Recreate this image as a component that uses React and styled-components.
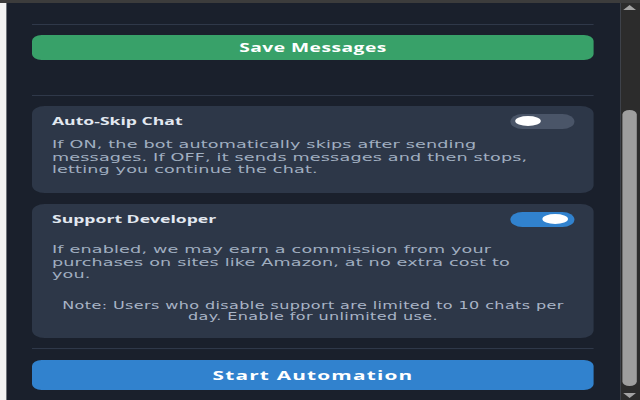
import React, { useState } from 'react';
import styled, { createGlobalStyle } from 'styled-components';

const GlobalStyle = createGlobalStyle`
  html, body {
    margin: 0;
    padding: 0;
    background: #f3f3f3;
    overflow: hidden;
  }
  body {
    font-family: "Open Sans", "Liberation Sans", sans-serif;
  }
`;

// the popup is drawn at 400px wide and stretched across the 640px window
const Stage = styled.div`
  width: 400px;
  height: 400px;
  transform: scaleX(1.6);
  transform-origin: 0 0;
  display: flex;
  flex-direction: column;
`;

const TopBand = styled.div`
  height: 3px;
  flex-shrink: 0;
  background: #3c3c3c;
`;

const Body = styled.div`
  flex: 1;
  display: flex;
  min-height: 0;
`;

const Gutter = styled.div`
  width: 4.4px;
  background: #f3f3f3;
`;

const Panel = styled.main`
  flex: 1;
  display: flex;
  flex-direction: column;
  padding: 0 16.25px 0 15.6px;
  background: #1a202c;
`;

const Divider = styled.hr`
  margin: ${(p) => p.$top}px 0 0;
  border: 0;
  height: 1px;
  background: #2f3849;
`;

const Button = styled.button`
  margin-top: ${(p) => p.$top}px;
  height: ${(p) => p.$height}px;
  border: 0;
  border-radius: 6px;
  background: ${(p) => p.$color};
  color: #ffffff;
  font-family: inherit;
  font-weight: 700;
  font-size: ${(p) => p.$size}px;
  letter-spacing: ${(p) => p.$spacing}px;
  cursor: pointer;
`;

const Card = styled.section`
  margin-top: ${(p) => p.$top}px;
  padding: 7px 12.5px 16.5px;
  border-radius: 8px;
  background: #2d3748;
`;

const CardHeader = styled.div`
  display: flex;
  align-items: center;
  justify-content: space-between;
  height: 16px;
`;

const Title = styled.h3`
  margin: 0;
  font-size: 11px;
  line-height: 16px;
  font-weight: 700;
  color: #e2e8f0;
`;

const Desc = styled.p`
  margin: ${(p) => p.$top}px 0 0;
  max-width: 313px;
  font-family: "DejaVu Sans", "Open Sans", sans-serif;
  font-size: 11px;
  line-height: 12.5px;
  letter-spacing: 0.1px;
  color: #a0aec0;
`;

const Note = styled.p`
  margin: 18px 0 0;
  font-family: "DejaVu Sans", "Open Sans", sans-serif;
  font-size: 10px;
  line-height: 11px;
  letter-spacing: 0.25px;
  text-align: center;
  color: #a9b4c6;
`;

const Track = styled.button`
  width: 40px;
  height: 15px;
  padding: 0 3.5px;
  border: 0;
  border-radius: 8px;
  display: flex;
  align-items: center;
  justify-content: ${(p) => (p.$on ? 'flex-end' : 'flex-start')};
  background: ${(p) => (p.$on ? '#3182ce' : '#4a5568')};
  cursor: pointer;
`;

const Knob = styled.span`
  width: 16px;
  height: 10px;
  border-radius: 50%;
  background: #ffffff;
`;

const Scrollbar = styled.div`
  width: 12.5px;
  display: flex;
  flex-direction: column;
  align-items: center;
  background: #2c2c2c;
`;

const Arrow = styled.svg`
  width: 9px;
  height: 7px;
  margin: ${(p) => p.$margin};
  fill: #a3a3a3;
`;

const Thumb = styled.div`
  width: 9.4px;
  height: 276px;
  margin-top: 99px;
  border-radius: 5px;
  background: #9e9e9e;
`;

const Toggle = ({ initial }) => {
  const [on, setOn] = useState(initial);
  return (
    <Track $on={on} onClick={() => setOn(!on)}>
      <Knob />
    </Track>
  );
};

export default function App() {
  return (
    <>
      <GlobalStyle />
      <Stage>
        <TopBand />
        <Body>
          <Gutter />
          <Panel>
            <Divider $top={21} />
            <Button $top={10} $height={25} $size={12} $spacing={0.3} $color="#38a169">
              Save Messages
            </Button>
            <Divider $top={35} />

            <Card $top={10}>
              <CardHeader>
                <Title>Auto-Skip Chat</Title>
                <Toggle initial={false} />
              </CardHeader>
              <Desc $top={10}>
                If ON, the bot automatically skips after sending messages. If OFF, it sends
                messages and then stops, letting you continue the chat.
              </Desc>
            </Card>

            <Card $top={11}>
              <CardHeader>
                <Title>Support Developer</Title>
                <Toggle initial={true} />
              </CardHeader>
              <Desc $top={17}>
                If enabled, we may earn a commission from your purchases on sites like Amazon, at
                no extra cost to you.
              </Desc>
              <Note>
                Note: Users who disable support are limited to 10 chats per day. Enable for
                unlimited use.
              </Note>
            </Card>

            <Divider $top={10} />
            <Button $top={11} $height={30} $size={13} $spacing={0.75} $color="#3182ce">
              Start Automation
            </Button>
          </Panel>
          <Scrollbar>
            <Arrow $margin="1px 0 0" viewBox="0 0 9 7">
              <path d="M4.5 1 L8.5 6 L0.5 6 Z" />
            </Arrow>
            <Thumb />
            <Arrow $margin="auto 0 1px" viewBox="0 0 9 7">
              <path d="M0.5 1 L8.5 1 L4.5 6 Z" />
            </Arrow>
          </Scrollbar>
        </Body>
      </Stage>
    </>
  );
}
